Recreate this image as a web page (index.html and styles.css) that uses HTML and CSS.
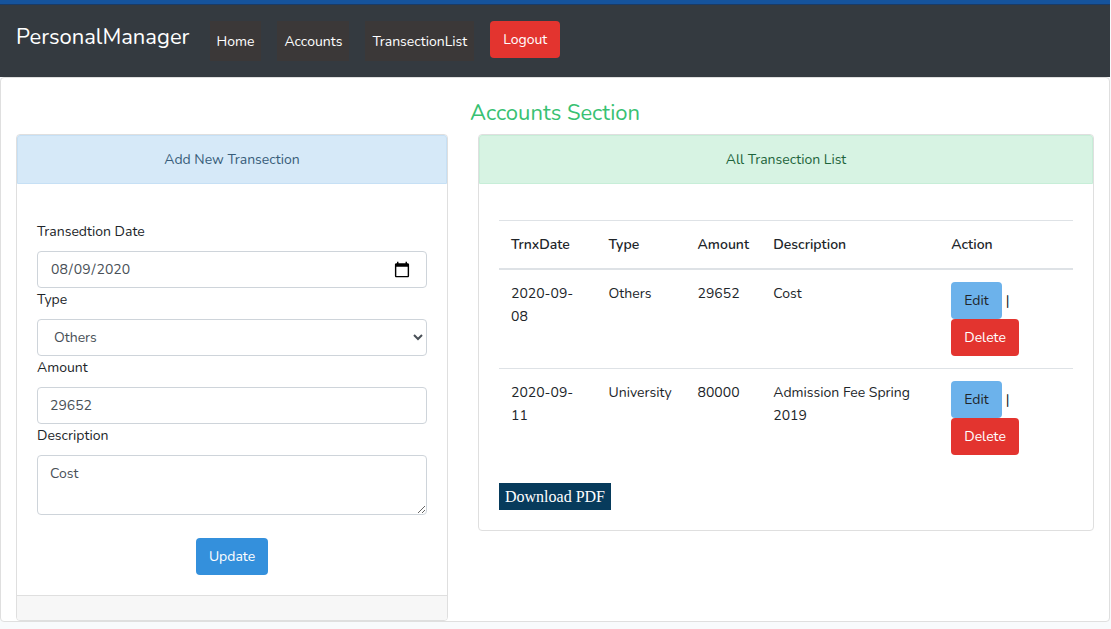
FILE: index.html
```html
<!DOCTYPE html>
<html lang="en">
<head>
<meta charset="utf-8">
<meta name="viewport" content="width=device-width, initial-scale=1">
<title>PersonalManager</title>
<link rel="stylesheet" href="styles.css">
</head>
<body>
<nav class="navbar">
  <a class="brand" href="#">PersonalManager</a>
  <ul class="nav-list">
    <li><a class="nav-link" href="#">Home</a></li>
    <li><a class="nav-link" href="#">Accounts</a></li>
    <li><a class="nav-link" href="#">TransectionList</a></li>
    <li><button class="btn btn-danger" type="button">Logout</button></li>
  </ul>
</nav>
<main class="card page-card">
  <h4 class="page-title">Accounts Section</h4>
  <div class="row">
    <section class="card">
      <div class="card-title title-blue">Add New Transection</div>
      <form class="card-body">
        <label class="label" for="date">Transedtion Date</label>
        <input class="control control-date" id="date" type="date" value="2020-08-09">
        <label class="label" for="type">Type</label>
        <select class="control" id="type"><option>Others</option><option>University</option></select>
        <label class="label" for="amount">Amount</label>
        <input class="control" id="amount" type="text" value="29652">
        <label class="label" for="description">Description</label>
        <textarea class="control control-area" id="description" rows="2">Cost</textarea>
        <div class="form-actions"><button class="btn btn-primary" type="button">Update</button></div>
      </form>
      <div class="card-footer"></div>
    </section>
    <section class="card">
      <div class="card-title title-green">All Transection List</div>
      <div class="card-body">
        <table class="table">
          <colgroup><col class="col-date"><col class="col-type"><col class="col-amount"><col class="col-description"><col></colgroup>
          <thead>
            <tr><th>TrnxDate</th><th>Type</th><th>Amount</th><th>Description</th><th>Action</th></tr>
          </thead>
          <tbody>
            <tr>
              <td>2020-09-08</td><td>Others</td><td>29652</td><td>Cost</td>
              <td><div class="actions"><button class="btn btn-info" type="button">Edit</button><span>|</span><button class="btn btn-danger" type="button">Delete</button></div></td>
            </tr>
            <tr>
              <td>2020-09-11</td><td>University</td><td>80000</td><td>Admission Fee Spring 2019</td>
              <td><div class="actions"><button class="btn btn-info" type="button">Edit</button><span>|</span><button class="btn btn-danger" type="button">Delete</button></div></td>
            </tr>
          </tbody>
        </table>
        <a class="download" href="#">Download PDF</a>
      </div>
    </section>
  </div>
</main>
</body>
</html>
```
FILE: styles.css
```css
*, *::before, *::after { box-sizing: border-box; }

body {
  margin: 0;
  padding-right: 1px;
  background: #f8fafc;
  color: #212529;
  font: 400 14px/23px Nunito, Lato, sans-serif;
}

.navbar {
  display: flex;
  align-items: flex-start;
  gap: 20px;
  padding: 17px 16px 16px;
  border-top: 4px solid #15539c;
  background: #343a40;
  box-shadow: inset 0 1px #1a3b66;
}
.brand {
  color: #fff;
  font-size: 22px;
  line-height: 32px;
  text-decoration: none;
}
.nav-list {
  display: flex;
  align-items: flex-start;
  gap: 16px;
  margin: 0;
  padding: 0;
  list-style: none;
}
.nav-link {
  display: block;
  padding: 9px 7px 7px;
  line-height: 24px;
  background: #3b3838;
  color: #fff;
  text-decoration: none;
}

.btn {
  display: block;
  padding: 6px 12px;
  border: 1px solid transparent;
  border-radius: 4px;
  font: inherit;
  cursor: pointer;
}
.btn-danger { background: #e3342f; color: #fff; }
.btn-primary { background: #3490dc; color: #fff; }
.btn-info { background: #6cb2eb; color: #212529; }

.card {
  border: 1px solid #dfdfdf;
  border-radius: 4px;
  background: #fff;
}
.page-title {
  margin: 0;
  padding: 21px 0 7px;
  color: #38c172;
  font-size: 22px;
  font-weight: 400;
  line-height: 28px;
  text-align: center;
}
.row {
  display: grid;
  grid-template-columns: minmax(0, 432fr) minmax(0, 616fr);
  align-items: start;
  gap: 30px;
  padding: 0 15px;
}
.card-title {
  padding: 12px 20px;
  border: 1px solid;
  border-radius: 3px 3px 0 0;
  text-align: center;
}
.title-blue { background: #d6e9f8; border-color: #c6e0f5; color: #385d7a; }
.title-green { background: #d7f3e3; border-color: #c7eed8; color: #1d643b; }
.card-body { padding: 36px 20px 20px; }
.card-footer {
  height: 25px;
  border-top: 1px solid #dfdfdf;
  border-radius: 0 0 3px 3px;
  background: #f7f7f7;
}

.label { display: block; margin-bottom: 8px; }
.control {
  display: block;
  width: 100%;
  height: 37px;
  padding: 6px 12px;
  border: 1px solid #ced4da;
  border-radius: 4px;
  background: #fff;
  color: #495057;
  font: inherit;
}
.control-date::-webkit-calendar-picker-indicator {
  width: 18px;
  height: 18px;
  margin-right: 3px;
  padding: 0;
}
.control-area { height: 60px; resize: vertical; }
.form-actions {
  display: flex;
  justify-content: center;
  padding-top: 23px;
}

.table {
  width: 100%;
  margin-bottom: 16px;
  border-collapse: collapse;
  table-layout: fixed;
}
.col-date { width: 17%; }
.col-type { width: 15.5%; }
.col-amount { width: 13.2%; }
.col-description { width: 31%; }
.table th,
.table td {
  padding: 12px;
  border-top: 1px solid #dee2e6;
  text-align: left;
  vertical-align: top;
}
.table th { border-bottom: 2px solid #dee2e6; font-weight: 600; }
.actions {
  display: flex;
  flex-wrap: wrap;
  align-items: center;
  column-gap: 4px;
}
.download {
  display: block;
  width: fit-content;
  padding: 4px 6px;
  background: #073b5c;
  color: #fff;
  font: 16px/19px "Liberation Serif", "Times New Roman", serif;
  text-decoration: none;
}
```
